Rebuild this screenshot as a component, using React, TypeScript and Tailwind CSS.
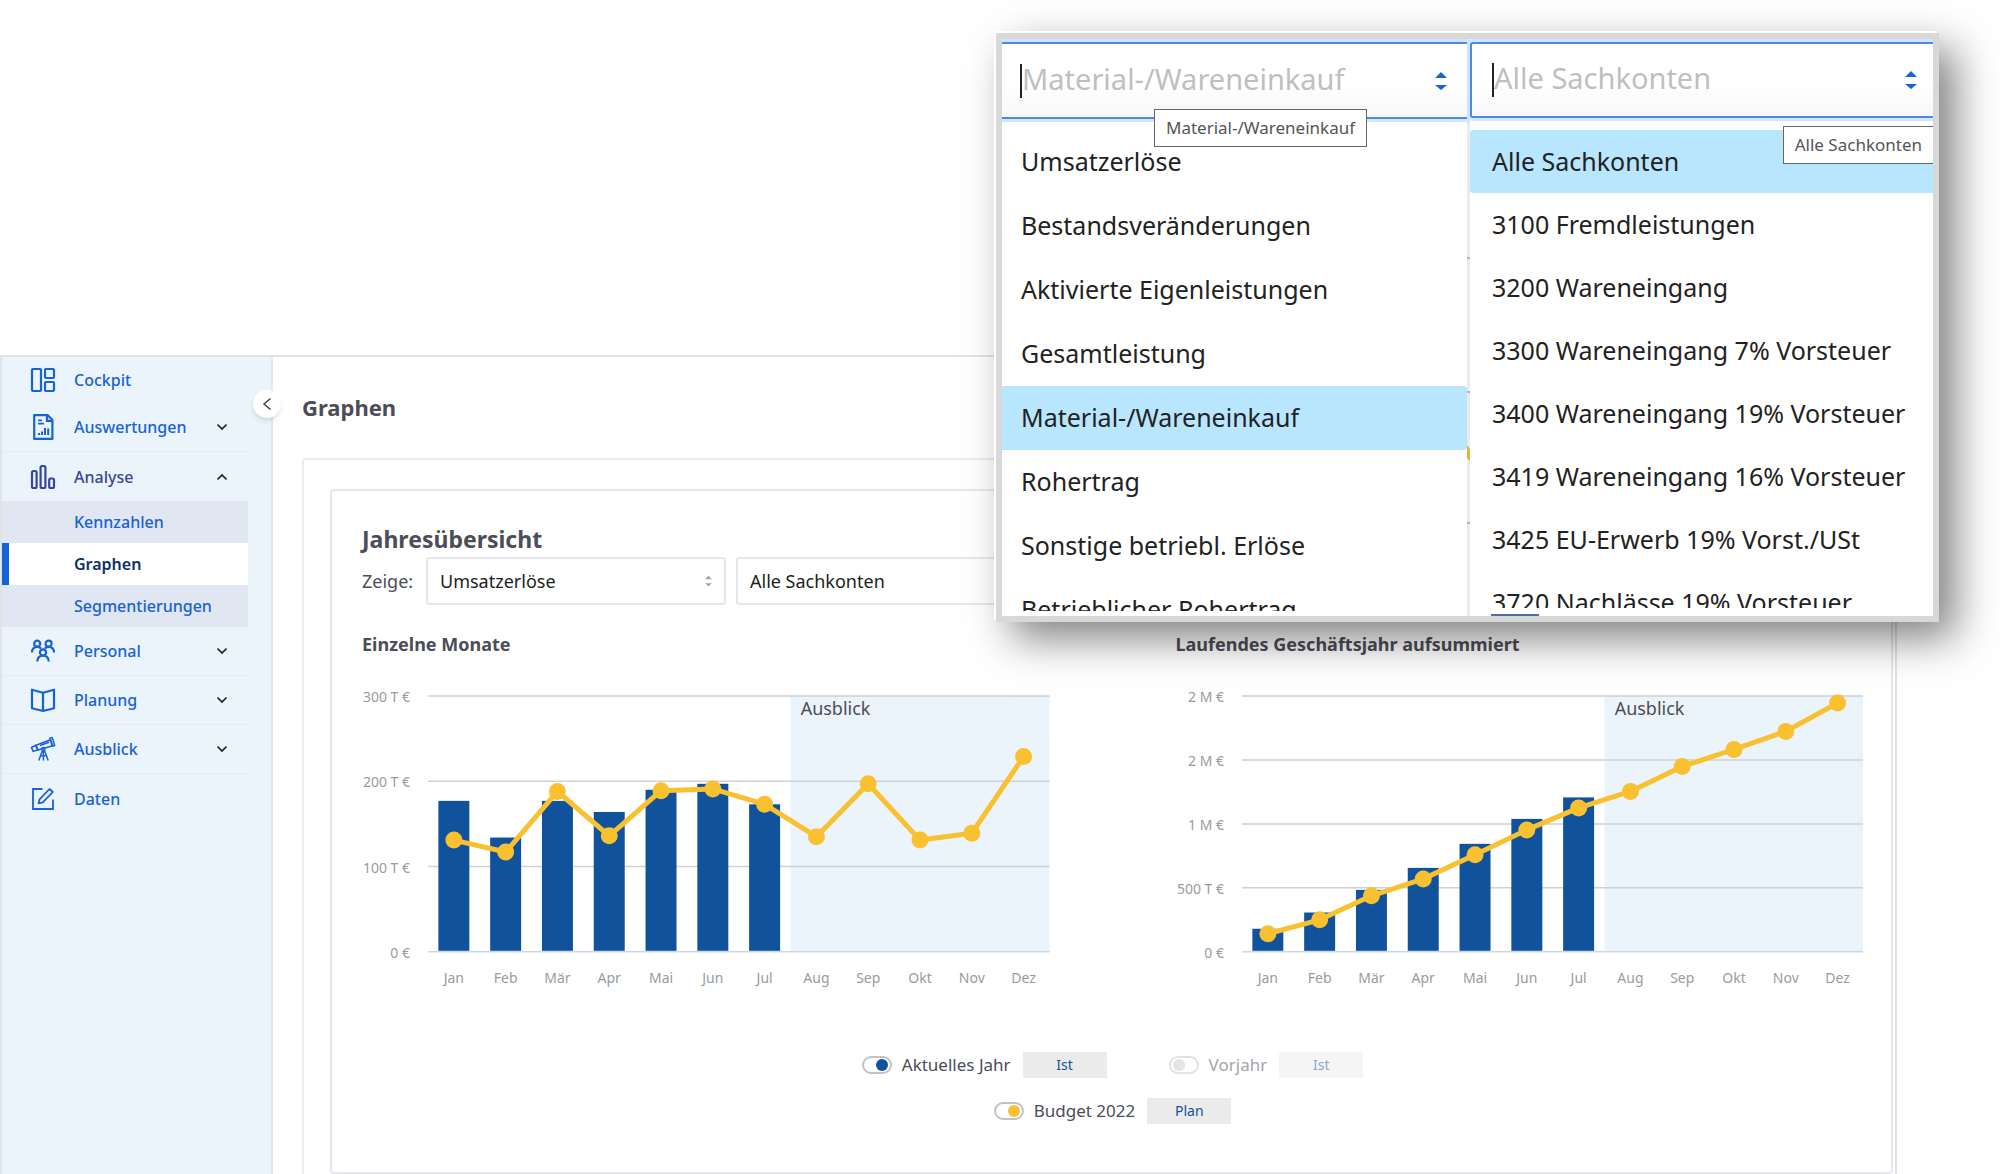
import { useState } from 'react';
import type { ReactNode } from 'react';

const MONTHS = ['Jan', 'Feb', 'Mär', 'Apr', 'Mai', 'Jun', 'Jul', 'Aug', 'Sep', 'Okt', 'Nov', 'Dez'];

// values in thousand euros
const MONTHLY = {
	max: 300,
	ticks: ['0 €', '100 T €', '200 T €', '300 T €'],
	actual: [177, 134, 177, 164, 190, 197, 173],
	budget: [131, 117, 188, 136, 189, 191, 173, 135, 197, 131, 139, 229],
};
const SUMMED = {
	max: 2000,
	ticks: ['0 €', '500 T €', '1 M €', '2 M €', '2 M €'],
	actual: [180, 307, 484, 656, 844, 1039, 1207],
	budget: [141, 250, 438, 570, 758, 953, 1125, 1254, 1449, 1582, 1723, 1945],
};

const CATEGORIES = [
	'Umsatzerlöse',
	'Bestandsveränderungen',
	'Aktivierte Eigenleistungen',
	'Gesamtleistung',
	'Material-/Wareneinkauf',
	'Rohertrag',
	'Sonstige betriebl. Erlöse',
	'Betrieblicher Rohertrag',
];
const ACCOUNTS = [
	'Alle Sachkonten',
	'3100 Fremdleistungen',
	'3200 Wareneingang',
	'3300 Wareneingang 7% Vorsteuer',
	'3400 Wareneingang 19% Vorsteuer',
	'3419 Wareneingang 16% Vorsteuer',
	'3425 EU-Erwerb 19% Vorst./USt',
	'3720 Nachlässe 19% Vorsteuer',
];

function Icon({ children, strokeWidth = 2.2 }: { children: ReactNode; strokeWidth?: number }) {
	return (
		<svg
			viewBox="0 0 24 24"
			className="h-6 w-6 shrink-0 overflow-visible"
			fill="none"
			stroke="currentColor"
			strokeWidth={strokeWidth}
			aria-hidden="true"
		>
			{children}
		</svg>
	);
}

function CockpitIcon() {
	return (
		<Icon>
			<rect x="1" y="1" width="9" height="22" rx="1" />
			<rect x="14" y="1" width="9" height="9" rx="1" />
			<rect x="14" y="14" width="9" height="9" rx="1" />
		</Icon>
	);
}

function ReportIcon() {
	return (
		<Icon>
			<path d="M3.2.2h13.6l4.6 4.8v18.8H3.2z" strokeLinejoin="round" />
			<path d="M16 .8v5h5" />
			<path d="M7 5.3h4M7 8.6h6" strokeWidth="1.8" />
			<path d="M8 18v2M11 16.5V20M14 13v7M17.2 13.5V20" strokeWidth="2" />
		</Icon>
	);
}

function BarsIcon() {
	return (
		<Icon>
			<rect x="1" y="6" width="4.6" height="17" rx="1.5" />
			<rect x="9.6" y="1" width="4.8" height="22" rx="1.5" />
			<rect x="18.2" y="13.5" width="4.8" height="9.5" rx="1.5" />
		</Icon>
	);
}

function PeopleIcon() {
	return (
		<Icon>
			<circle cx="6.2" cy="4.7" r="3" />
			<circle cx="17.6" cy="4.7" r="3" />
			<circle cx="12" cy="13.4" r="3.1" />
			<path d="M1 13.5c0-3.6 2-5.7 5.2-5.7 1.7 0 3 .6 3.9 1.9M23 13.5c0-3.6-2-5.7-5.3-5.7-1.7 0-3 .6-3.9 1.9" />
			<path d="M6.200 22.5c.3-3.7 2.3-5.9 5.8-5.9s5.5 2.2 5.8 5.9" />
		</Icon>
	);
}

function BookIcon() {
	return (
		<Icon>
			<path d="M1 1.7 12 4.800l11-3.100v18.500L12 23 1 20.200z" strokeLinejoin="round" />
			<path d="M12 4.800V23" />
		</Icon>
	);
}

function TelescopeIcon() {
	return (
		<Icon strokeWidth={1.5}>
			<path d="M5 8.2 19.6 2.8l2 6L7 13z" strokeLinejoin="round" />
			<path d="m18.8 1.200 2.400-.8 2.500 8.100-2.300.8z" strokeLinejoin="round" />
			<path d="M.5 10.500 4.600 8.300l1.900 4.800-4.400 1.200zM9 8.500l9-3.200" />
			<circle cx="12.4" cy="11.9" r="1.5" />
			<path d="M12.4 13.5v10M11.4 13.5 7.8 23.5M13.5 13.5l3.7 10M9.8 18.8h5.4" />
		</Icon>
	);
}

function EditIcon() {
	return (
		<Icon strokeWidth={1.8}>
			<path d="M11.5 2H2v20h20v-9.500" />
			<path d="m8.500 12.400 10-10.400 3.300 3-10 10.400-4.200 1z" strokeLinejoin="round" />
		</Icon>
	);
}

function Chevron({ open = false }: { open?: boolean }) {
	return (
		<svg viewBox="0 0 12 8" className="h-2 w-3" fill="none" stroke="#222" strokeWidth="1.7" aria-hidden="true">
			<path d={open ? 'm1.500 6.500 4.500-4.500 4.500 4.500' : 'm1.500 1.500 4.500 4.500 4.500-4.500'} />
		</svg>
	);
}

function SortArrows({ className }: { className: string }) {
	return (
		<svg viewBox="0 0 12 20" className={className} fill="currentColor" aria-hidden="true">
			<path d="M6 1 12 7H0zM6 19l6-5H0z" />
		</svg>
	);
}

const MENU = [
	{ label: 'Cockpit', icon: <CockpitIcon /> },
	{ label: 'Auswertungen', icon: <ReportIcon />, expandable: true },
	{ label: 'Analyse', icon: <BarsIcon />, expandable: true, children: ['Kennzahlen', 'Graphen', 'Segmentierungen'] },
	{ label: 'Personal', icon: <PeopleIcon />, expandable: true },
	{ label: 'Planung', icon: <BookIcon />, expandable: true },
	{ label: 'Ausblick', icon: <TelescopeIcon />, expandable: true },
	{ label: 'Daten', icon: <EditIcon /> },
];

function Sidebar() {
	const [active, setActive] = useState('Graphen');
	return (
		<aside className="relative w-[271px] shrink-0 border-r-2 border-[#e3e8f3] bg-[#ebf3fb] pr-[23px] text-base font-medium">
			<nav>
				{MENU.map((item) => (
					<div key={item.label}>
						<button
							type="button"
							className={`flex w-full items-center pr-5 pl-[29px] ${
								item.children ? 'h-12 text-[#3a469c]' : 'text-[#1862d8]'
							} ${item.label === 'Cockpit' ? 'h-[46px]' : 'h-[49px]'} ${
								item.expandable && !item.children ? 'border-b border-[#e5ebf4]' : ''
							}`}
						>
							{item.icon}
							<span className="ml-[19px]">{item.label}</span>
							{item.expandable && (
								<span className="ml-auto">
									<Chevron open={!!item.children} />
								</span>
							)}
						</button>
						{item.children?.map((child) => (
							<button
								key={child}
								type="button"
								onClick={() => setActive(child)}
								className={`flex h-[42px] w-full items-center ${
									active === child
										? 'border-l-[7px] border-[#1862d8] bg-white pl-[65px] font-semibold text-[#0c2f6b]'
										: 'bg-[#e0e6f2] pl-[72px] text-[#1862d8]'
								}`}
							>
								{child}
							</button>
						))}
					</div>
				))}
			</nav>
			<button
				type="button"
				aria-label="Menü einklappen"
				className="absolute top-[33px] -right-2.5 grid h-7 w-7 place-items-center rounded-full bg-white shadow-md"
			>
				<svg viewBox="0 0 10 14" className="h-3.5 w-2.5" fill="none" stroke="#444" strokeWidth="1.5" aria-hidden="true">
					<path d="M8.500 1.500 2 7l6.500 5.500" />
				</svg>
			</button>
		</aside>
	);
}

function Chart({ title, data }: { title: string; data: typeof MONTHLY }) {
	const left = 66;
	const base = 272;
	const height = 256;
	const step = 622 / 12;
	const yOf = (value: number) => base - (value / data.max) * height;
	const xOf = (index: number) => left + step * (index + 0.5);
	return (
		<section>
			<h3 className="text-lg leading-6 font-bold">{title}</h3>
			<svg viewBox="0 0 688 310" className="mt-6 w-full" role="img" aria-label={title}>
				<rect x={left + step * 7} y={base - height} width={step * 5} height={height} fill="#ebf3fb" />
				{data.ticks.map((tick, index) => {
					const y = base - (index * height) / (data.ticks.length - 1);
					return (
						// eslint-disable-next-line react/no-array-index-key
						<g key={index}>
							<line x1={left} x2="688" y1={y} y2={y} stroke={index ? '#d0d1d4' : '#ccd6eb'} strokeWidth="1.5" />
							<text x="48" y={y + 6} textAnchor="end" fontSize="14" fill="#999ba0">
								{tick}
							</text>
						</g>
					);
				})}
				<text x="439" y="35" fontSize="18" fill="#4c4d57">
					Ausblick
				</text>
				{data.actual.map((value, index) => (
					<rect
						key={MONTHS[index]}
						x={xOf(index) - 15.5}
						y={yOf(value)}
						width="31"
						height={base - yOf(value) - 1}
						fill="#11529c"
					/>
				))}
				<polyline
					points={data.budget.map((value, index) => `${xOf(index)},${yOf(value)}`).join(' ')}
					fill="none"
					stroke="#f9c130"
					strokeWidth="5"
					strokeLinejoin="round"
				/>
				{data.budget.map((value, index) => (
					<circle key={MONTHS[index]} cx={xOf(index)} cy={yOf(value)} r="8.500" fill="#f9c130" />
				))}
				{MONTHS.map((month, index) => (
					<text key={month} x={xOf(index)} y="303" textAnchor="middle" fontSize="14" fill="#999ba0">
						{month}
					</text>
				))}
			</svg>
		</section>
	);
}

interface LegendProps {
	label: string;
	tag: string;
	dot: string;
	initial?: boolean;
}
function LegendItem({ label, tag, dot, initial = true }: LegendProps) {
	const [checked, setChecked] = useState(initial);
	return (
		<div className="flex h-[26px] items-center">
			<label className="flex items-center gap-2.5">
				<input type="checkbox" className="sr-only" checked={checked} onChange={() => setChecked(!checked)} />
				<span
					className={`flex h-[18px] w-[30px] items-center rounded-full border-2 bg-white px-0.5 ${
						checked ? 'justify-end border-[#c2c3c5]' : 'border-[#dde3e8]'
					}`}
				>
					<span className={`h-3 w-3 rounded-full ${checked ? dot : 'bg-[#e4e4e4]'}`} />
				</span>
				<span className={checked ? 'text-[#4c4d57]' : 'text-[#a5a6ab]'}>{label}</span>
			</label>
			<button
				type="button"
				className={`ml-3 h-[26px] w-[84px] text-sm ${
					checked ? 'bg-[#ebebeb] text-[#11529c]' : 'bg-[#f5f5f5] text-[#88a9d3]'
				}`}
			>
				{tag}
			</button>
		</div>
	);
}

function FilterSelect({ id, label, options }: { id: string; label: string; options: string[] }) {
	return (
		<div className="relative w-[300px]">
			<select
				id={id}
				aria-label={label}
				className="h-12 w-full appearance-none rounded-[3px] border-2 border-[#e6e7ea] bg-white pl-3 text-lg text-[#1d1e20]"
			>
				{options.map((option) => (
					<option key={option}>{option}</option>
				))}
			</select>
			<SortArrows className="pointer-events-none absolute top-[18px] right-3.5 h-3 w-[7px] text-[#a0a1a5]" />
		</div>
	);
}

interface PickerProps {
	placeholder: string;
	options: string[];
	side: 'left' | 'right';
}
function Picker({ placeholder, options, side }: PickerProps) {
	const [selected, setSelected] = useState(placeholder);
	const isLeft = side === 'left';
	return (
		<div className={`flex h-full min-w-0 flex-col bg-white pt-[3px] ${isLeft ? 'w-[465px] shrink-0' : 'flex-1'}`}>
			<div
				className={`flex shrink-0 items-center border-[#4a8ae8] bg-linear-to-b from-white from-50% to-[#f8f8f9] shadow-[0_0_0_3px_#d3e5fa] ${
					isLeft ? 'h-[77px] border-y-2 pr-5 pl-[18px]' : 'h-[76px] rounded-l-[3px] border-y-2 border-l-2 pr-4 pl-5'
				}`}
			>
				<span className="h-[34px] w-0.5 bg-[#222]" />
				<input
					aria-label={placeholder}
					placeholder={placeholder}
					className="min-w-0 flex-1 bg-transparent pb-1 text-[29px] placeholder:text-[#bfbfbf] outline-none"
				/>
				<SortArrows className="h-5 w-3 text-[#1862d8]" />
			</div>
			<ul className={`overflow-hidden ${isLeft ? 'mt-[11px] h-[481px]' : 'mt-3 h-[478px]'}`}>
				{options.map((option) => (
					<li key={option}>
						<button
							type="button"
							onClick={() => setSelected(option)}
							className={`flex w-full items-center text-[25px] whitespace-nowrap ${
								isLeft ? 'h-16 rounded-r-[3px] pl-[19px]' : 'h-[63px] rounded-l-[3px] pl-[22px]'
							} ${selected === option ? 'bg-[#b9e6ff]' : ''}`}
						>
							{option}
						</button>
					</li>
				))}
			</ul>
		</div>
	);
}

function PickerOverlay() {
	return (
		<div className="absolute top-[33px] left-[996px] flex h-[589px] w-[943px] border-[6px] border-[#d8d8d8] text-[#222] shadow-[-2px_-2px_0_0_#fff,16px_16px_40px_rgba(0,0,0,0.5)]">
			<div className="flex min-w-0 flex-1 overflow-hidden">
				<Picker placeholder="Material-/Wareneinkauf" options={CATEGORIES} side="left" />
				<svg viewBox="0 0 3 577" className="h-full w-[3px] shrink-0" aria-hidden="true">
					<rect width="3" height="577" fill="#ebebed" />
					<rect width="3" height="84" fill="#d3e5fa" />
					<path d="M0 219h3M0 353h3M0 484h3" stroke="#b5b5b5" strokeWidth="2" />
					<path d="M0 406l3 4v12l-3-3z" fill="#e6b437" />
				</svg>
				<Picker placeholder="Alle Sachkonten" options={ACCOUNTS} side="right" />
			</div>
			<span
				role="tooltip"
				className="absolute top-[70px] left-[152px] flex h-[38px] items-center border border-[#666] bg-white px-[11px] text-[17px] text-[#555]"
			>
				Material-/Wareneinkauf
			</span>
			<span
				role="tooltip"
				className="absolute top-[87px] right-0 flex h-[38px] items-center border border-r-0 border-[#666] bg-white px-[11px] text-[17px] text-[#555]"
			>
				Alle Sachkonten
			</span>
			<svg viewBox="0 0 48 2" className="absolute bottom-0 left-[489px] h-0.5 w-12" aria-hidden="true">
				<rect width="48" height="2" fill="#4a6fa5" />
			</svg>
		</div>
	);
}

export default function App() {
	return (
		<div className="relative flex min-h-screen flex-col overflow-hidden bg-white pt-[355px] pr-[103px] font-['Noto_Sans',sans-serif] text-[#4c4d57]">
			<div className="flex flex-1 border-2 border-b-0 border-[#e2e3e5]">
				<Sidebar />
				<main className="min-w-0 flex-1 pt-[34px] pl-[29px]">
					<h1 className="text-[22px] leading-8 font-bold">Graphen</h1>
					<div className="mt-[35px] rounded-tl-[4px] border-t-2 border-l-2 border-[#ebebf1] pt-[29px] pr-0.5 pb-px pl-[26px]">
						<div className="rounded-[4px] border-2 border-[#e5e6ef] pt-8 pr-7 pb-12 pl-[30px]">
							<h2 className="text-[23px] leading-8 font-bold">Jahresübersicht</h2>
							<div className="mt-0.5 flex items-center gap-2.5">
								<label htmlFor="category" className="w-[54px] text-lg">
									Zeige:
								</label>
								<FilterSelect id="category" label="Zeige Kategorie" options={CATEGORIES} />
								<FilterSelect id="account" label="Zeige Sachkonto" options={ACCOUNTS} />
							</div>
							<div className="mt-[27px] grid grid-cols-2 gap-x-[126px]">
								<Chart title="Einzelne Monate" data={MONTHLY} />
								<Chart title="Laufendes Geschäftsjahr aufsummiert" data={SUMMED} />
							</div>
							<div className="mt-[62px] flex flex-col items-center gap-5 text-[17px]">
								<div className="flex gap-[62px]">
									<LegendItem label="Aktuelles Jahr" tag="Ist" dot="bg-[#11529c]" />
									<LegendItem label="Vorjahr" tag="Ist" dot="bg-[#11529c]" initial={false} />
								</div>
								<LegendItem label="Budget 2022" tag="Plan" dot="bg-[#f9c130]" />
							</div>
						</div>
					</div>
				</main>
			</div>
			<PickerOverlay />
		</div>
	);
}
